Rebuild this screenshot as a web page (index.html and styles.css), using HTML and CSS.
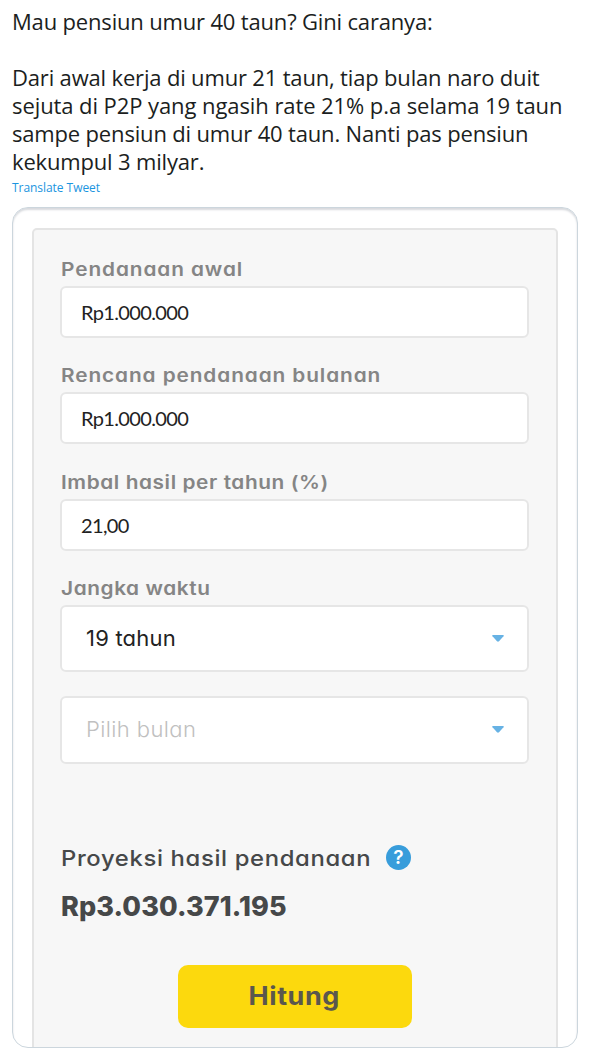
FILE: index.html
```html
<!DOCTYPE html>
<html lang="id">
<head>
    <meta charset="UTF-8">
    <meta name="viewport" content="width=device-width, initial-scale=1.0">
    <title>Tweet</title>
    <link rel="stylesheet" href="styles.css">
</head>
<body>
    <div class="tweet">
        <div class="tweet-text">
            <p>Mau pensiun umur 40 taun? Gini caranya:</p>
            <p>
                Dari awal kerja di umur 21 taun, tiap bulan naro duit<br>
                <span class="wide">sejuta di P2P yang ngasih rate 21% p.a selama 19 taun</span><br>
                sampe pensiun di umur 40 taun. Nanti pas pensiun<br>
                kekumpul 3 milyar.
            </p>
        </div>
        <a class="translate">Translate Tweet</a>

        <div class="media">
            <div class="calculator">
                <div class="field">
                    <label><span>Pendanaan awal</span></label>
                    <div class="input">Rp1.000.000</div>
                </div>
                <div class="field">
                    <label><span>Rencana pendanaan bulanan</span></label>
                    <div class="input">Rp1.000.000</div>
                </div>
                <div class="field">
                    <label><span class="label-narrow">Imbal hasil per tahun (%)</span></label>
                    <div class="input">21,00</div>
                </div>
                <div class="field">
                    <label><span class="label-narrow">Jangka waktu</span></label>
                    <div class="select">
                        <span class="year">19 tahun</span>
                        <svg width="12" height="7" viewBox="0 0 12 7"><path d="M0.8 0h10.4q1 0.3 0.3 1.2L7 6.2q-1 0.9-2 0L0.5 1.2Q-0.2 0.3 0.8 0z" fill="#67b2e4"/></svg>
                    </div>
                </div>
                <div class="select">
                    <span class="placeholder">Pilih bulan</span>
                    <svg width="12" height="7" viewBox="0 0 12 7"><path d="M0.8 0h10.4q1 0.3 0.3 1.2L7 6.2q-1 0.9-2 0L0.5 1.2Q-0.2 0.3 0.8 0z" fill="#67b2e4"/></svg>
                </div>

                <div class="result">
                    <div class="result-title">
                        <span class="result-label">Proyeksi hasil pendanaan</span>
                        <span class="help">?</span>
                    </div>
                    <div class="result-amount">Rp3.030.371.195</div>
                </div>
                <div class="button"><span class="button-text">Hitung</span></div>
            </div>
        </div>
    </div>
</body>
</html>
```
FILE: styles.css
```css
* {
    box-sizing: border-box;
}
body {
    margin: 0;
    background-color: #fff;
    font-family: "Open Sans", "Noto Sans", sans-serif;
    color: #1b1e21;
}
.tweet {
    padding: 7px 14px 11px 12px;
}
.tweet-text {
    font-size: 22px;
    line-height: 28px;
    letter-spacing: -0.17px;
    white-space: nowrap;
}
.wide {
    letter-spacing: -0.08px;
}
.tweet-text p {
    margin: 0 0 28px;
}
.tweet-text p:last-child {
    margin-bottom: 0;
}
.translate {
    display: block;
    height: 32px;
    font-size: 12px;
    line-height: 25px;
    letter-spacing: -0.05px;
    color: #1b95e0;
}
.media {
    height: 841px;
    padding: 20px 19px 0;
    border: 1px solid #ccd6dd;
    border-radius: 16px;
    box-shadow: inset 0 2px 2px #d8dade;
    overflow: hidden;
}
.calculator {
    height: 840px;
    padding: 26px 27px 0 26px;
    border: 2px solid #e4e4e4;
    border-radius: 5px;
    background-color: #f7f7f7;
    font-family: Inter, sans-serif;
    font-feature-settings: "cv11";
    white-space: nowrap;
}
.field {
    margin-bottom: 24.3px;
}
.field label {
    display: block;
    height: 30px;
    padding-left: 0.5px;
    font-size: 18.5px;
    font-weight: 600;
    line-height: 26px;
    color: #858585;
}
.field label span {
    display: inline-block;
    letter-spacing: 0.8px;
    transform: scaleX(1.125);
    transform-origin: left;
}
.field label .label-narrow {
    letter-spacing: 0.52px;
}
.input {
    height: 52px;
    padding-left: 19px;
    border: 2px solid #e6e6e6;
    border-radius: 6px;
    background-color: #fff;
    font-family: Lato, sans-serif;
    font-size: 20px;
    line-height: 49px;
    letter-spacing: -0.65px;
    color: #222;
}
.select {
    display: flex;
    justify-content: space-between;
    align-items: center;
    height: 67.5px;
    padding: 0 23px 0 24px;
    border: 2px solid #e6e6e6;
    border-radius: 6px;
    background-color: #fff;
    font-size: 22px;
    line-height: 26px;
    color: #222;
}
.select span {
    padding-bottom: 1px;
}
.field .select {
    margin-bottom: -0.5px;
}
.year {
    letter-spacing: 0.2px;
}
.placeholder {
    color: #c0c0c0;
    font-weight: 300;
    letter-spacing: 0.4px;
}
.result {
    padding: 78px 0 0 1px;
    color: #464849;
}
.result-title {
    display: flex;
    align-items: center;
    height: 32px;
    font-size: 22px;
    font-weight: 500;
}
.result-label {
    width: 325px;
    letter-spacing: 0.6px;
    transform: scaleX(1.083);
    transform-origin: left;
}
.help {
    width: 25px;
    height: 25px;
    border-radius: 50%;
    background-color: #389ddb;
    color: #fff;
    font-size: 19px;
    font-weight: 600;
    line-height: 25px;
    text-align: center;
}
.result-amount {
    height: 64px;
    font-size: 27px;
    font-weight: 800;
    line-height: 65px;
    letter-spacing: 0.1px;
}
.button {
    width: 234px;
    height: 63px;
    margin: 27px auto 0;
    border-radius: 10px;
    background-color: #fcd90d;
    color: #5b574d;
    font-size: 25px;
    font-weight: 700;
    line-height: 63px;
    text-align: center;
}
.button-text {
    display: inline-block;
    letter-spacing: 0.5px;
    transform: scaleX(1.08);
}
```
